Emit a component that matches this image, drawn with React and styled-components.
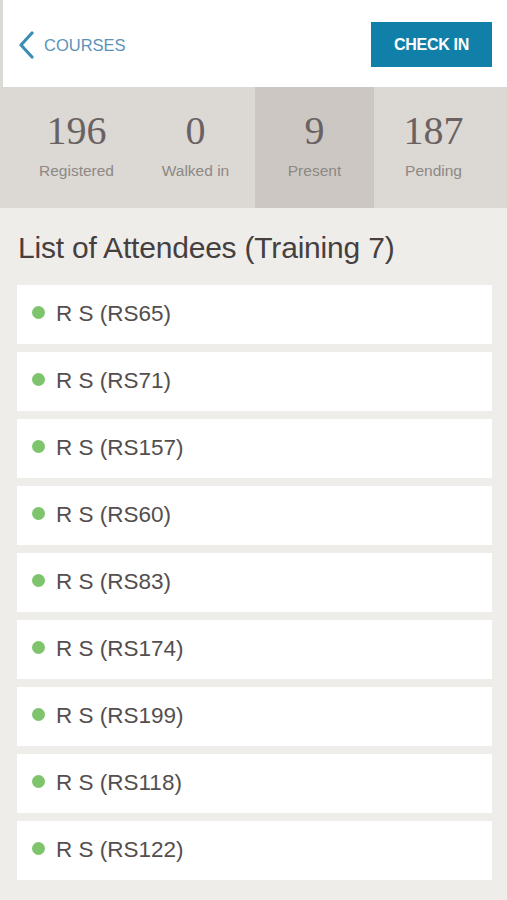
import styled, { createGlobalStyle } from 'styled-components';

const GlobalStyle = createGlobalStyle`
  html, body {
    margin: 0;
    padding: 0;
    background: #efedea;
  }
  * {
    box-sizing: border-box;
  }
`;

const stats = [
  { value: 196, label: 'Registered' },
  { value: 0, label: 'Walked in' },
  { value: 9, label: 'Present', active: true },
  { value: 187, label: 'Pending' },
];

const attendees = ['RS65', 'RS71', 'RS157', 'RS60', 'RS83', 'RS174', 'RS199', 'RS118', 'RS122'];

export default function App() {
  return (
    <StPage>
      <GlobalStyle />
      <StHeader>
        <StBack>
          <svg width="17" height="28" viewBox="0 0 17 28">
            <path d="M14 2 L3 14 L14 26" fill="none" stroke="#3b8db5" strokeWidth="3.2" strokeLinecap="round" strokeLinejoin="round" />
          </svg>
          <span>COURSES</span>
        </StBack>
        <StCheckIn>CHECK IN</StCheckIn>
      </StHeader>
      <StStats>
        {stats.map((s) => (
          <StStat key={s.label} $active={s.active}>
            <strong>{s.value}</strong>
            <span>{s.label}</span>
          </StStat>
        ))}
      </StStats>
      <StBody>
        <StTitle>List of Attendees (Training 7)</StTitle>
        <StList>
          {attendees.map((code) => (
            <StAttendee key={code}>
              <StDot />
              R S ({code})
            </StAttendee>
          ))}
        </StList>
      </StBody>
    </StPage>
  );
}

const StPage = styled.div`
  width: 507px;
  min-height: 900px;
  background: #efedea;
  font-family: 'Liberation Sans', Arial, sans-serif;
`;

const StHeader = styled.header`
  height: 87px;
  background: #fff;
  border-left: 3px solid #dcdad7;
  display: flex;
  align-items: center;
  justify-content: space-between;
  padding: 2px 15px 0 15px;
`;

const StBack = styled.a`
  display: flex;
  align-items: center;
  gap: 9px;
  color: #5b93b8;
  font-size: 16.5px;
  cursor: pointer;
  span {
    margin-top: 2px;
  }
  svg {
    display: block;
  }
`;

const StCheckIn = styled.button`
  width: 121px;
  height: 45px;
  border: none;
  background: #1180a9;
  color: #fff;
  font-family: 'Liberation Sans', Arial, sans-serif;
  font-weight: bold;
  font-size: 16px;
  letter-spacing: -0.3px;
`;

const StStats = styled.div`
  height: 121px;
  background: #dcd8d4;
  display: grid;
  grid-template-columns: repeat(4, 1fr);
  padding: 0 14px 0 17px;
`;

const StStat = styled.div`
  display: flex;
  flex-direction: column;
  align-items: center;
  padding-top: 21px;
  background: ${({ $active }) => ($active ? '#ccc7c2' : 'transparent')};
  strong {
    font-family: 'Liberation Serif', 'Times New Roman', serif;
    font-weight: normal;
    font-size: 40px;
    line-height: 46px;
    color: #6a6262;
  }
  span {
    margin-top: 8px;
    font-size: 15.5px;
    color: #8d8884;
  }
`;

const StBody = styled.div`
  padding: 22px 15px 19px 17px;
`;

const StTitle = styled.h2`
  margin: 0 0 20px 1px;
  font-weight: normal;
  font-size: 30px;
  line-height: 35px;
  color: #463f3f;
  letter-spacing: -0.2px;
`;

const StList = styled.div`
  display: flex;
  flex-direction: column;
  gap: 8px;
`;

const StAttendee = styled.div`
  height: 59px;
  background: #fff;
  display: flex;
  align-items: center;
  padding-left: 15px;
  padding-bottom: 2px;
  font-size: 22.5px;
  color: #544e4e;
`;

const StDot = styled.span`
  width: 13px;
  height: 13px;
  border-radius: 50%;
  background: #7dc46d;
  margin-right: 11px;
  margin-top: -2px;
`;
